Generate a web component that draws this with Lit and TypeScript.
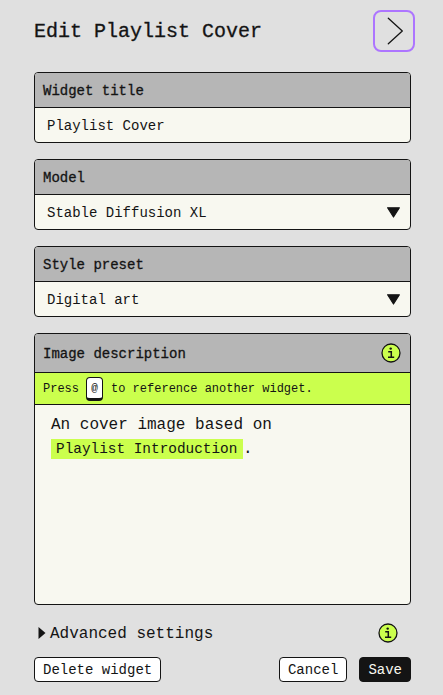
import { LitElement, html, css, svg } from "lit";
import { customElement, property } from "lit/decorators.js";

@customElement("info-badge")
class InfoBadge extends LitElement {
  static styles = css`
    :host { display: block; width: 20px; height: 20px; flex: none; }
    .icon { display: block; }
  `;
  render() {
    return html`<svg class="icon" width="20" height="20" viewBox="0 0 20 20">
      <circle cx="10" cy="10" r="9" fill="#cbff4d" stroke="#141414" stroke-width="1.3" />
      <circle cx="9.7" cy="5.6" r="1.2" fill="#141414" />
      <path d="M7.2 8.7H10.3V14M7 14.2H13.2" fill="none" stroke="#141414" stroke-width="1.5" />
    </svg>`;
  }
}

@customElement("field-box")
class FieldBox extends LitElement {
  @property() label = "";
  @property() value = "";
  @property({ type: Boolean }) select = false;

  static styles = css`
    :host { display: block; }
    .box {
      border: 1px solid #141414;
      border-radius: 4px;
      overflow: hidden;
      background: #f8f8f0;
    }
    .label, .value {
      display: flex;
      align-items: center;
      box-sizing: border-box;
      height: 34px;
      font-size: 14px;
      line-height: 20px;
    }
    .label {
      height: 35px;
      padding: 2px 8px 0;
      background: #b6b6b6;
      border-bottom: 1px solid #141414;
      -webkit-text-stroke: 0.3px #141414;
    }
    .value { justify-content: space-between; padding: 0 10px 0 12px; }
    .text { padding-top: 2px; }
    .arrow { display: block; }
  `;
  render() {
    return html`<div class="box">
      <div class="label">${this.label}</div>
      <div class="value">
        <span class="text">${this.value}</span>
        ${this.select
          ? html`<svg class="arrow" width="13" height="11" viewBox="0 0 13 11">
              ${svg`<path d="M.6 .8H12.4L6.5 10Z" fill="#141414" stroke="#141414" stroke-width="1.2" stroke-linejoin="round"/>`}
            </svg>`
          : ""}
      </div>
    </div>`;
  }
}

@customElement("app-root")
class AppRoot extends LitElement {
  static styles = css`
    :host {
      display: flex;
      flex-direction: column;
      box-sizing: border-box;
      width: 443px;
      height: 695px;
      padding: 10px 32px 0 34px;
      background: #e0e0e0;
      color: #141414;
      font-family: "Liberation Mono", monospace;
    }
    .header {
      display: flex;
      justify-content: space-between;
      align-items: center;
      height: 42px;
      margin-right: -4px;
      margin-bottom: 20px;
    }
    .title {
      margin: 0;
      padding-top: 2px;
      font-size: 20px;
      font-weight: 400;
      line-height: 28px;
      -webkit-text-stroke: 0.3px #141414;
    }
    .next {
      box-sizing: border-box;
      width: 42px;
      height: 42px;
      padding: 0;
      border: 2px solid #ad75ff;
      border-radius: 8px;
      background: none;
    }
    .chevron { display: block; }
    .fields { display: flex; flex-direction: column; gap: 16px; }
    .editor {
      display: flex;
      flex-direction: column;
      box-sizing: border-box;
      height: 272px;
      border: 1px solid #141414;
      border-radius: 4px;
      overflow: hidden;
      background: #f8f8f0;
    }
    .bar {
      display: flex;
      align-items: center;
      justify-content: space-between;
      box-sizing: border-box;
      height: 39px;
      padding: 0 9px 0 8px;
      background: #b6b6b6;
      border-bottom: 1px solid #141414;
      font-size: 14px;
    }
    .strong { padding-top: 2px; -webkit-text-stroke: 0.3px #141414; }
    .hint {
      display: flex;
      align-items: center;
      box-sizing: border-box;
      height: 32px;
      padding: 0 8px;
      background: #cbff4d;
      border-bottom: 1px solid #141414;
      font-size: 12px;
    }
    .key {
      box-sizing: border-box;
      width: 17px;
      height: 24px;
      margin: 0 8px 0 7px;
      border: 1px solid #141414;
      border-bottom-width: 3px;
      border-radius: 4px;
      background: #fff;
      font-size: 11px;
      line-height: 20px;
      text-align: center;
    }
    .text { padding: 8px 16px; font-size: 16px; line-height: 24px; }
    .mention {
      padding: 2px 5.6px 2px 5px;
      background: #cbff4d;
      font-size: 14.4px;
    }
    .advanced {
      display: flex;
      align-items: center;
      height: 20px;
      margin: 18px 13px 0 4px;
      font-size: 16px;
    }
    .caret { display: block; margin-right: 4px; }
    .grow { flex: 1; }
    .advanced .grow { padding-top: 1px; }
    .actions { display: flex; gap: 12px; margin-top: 14px; }
    .button {
      box-sizing: border-box;
      height: 25px;
      padding: 2px 8px 0;
      border: 1px solid #141414;
      border-radius: 4px;
      background: #fff;
      color: #141414;
      font: 14px/21px "Liberation Mono", monospace;
    }
    .primary { background: #141414; color: #f8f8f0; }
  `;
  render() {
    return html`
      <div class="header">
        <h1 class="title">Edit Playlist Cover</h1>
        <button class="next" aria-label="Next">
          <svg class="chevron" width="38" height="38" viewBox="0 0 38 38">
            <path d="M13.3 6.3L27.3 19L13.3 31.7" fill="none" stroke="#141414" stroke-width="1.3" stroke-linecap="round" stroke-linejoin="round" />
          </svg>
        </button>
      </div>
      <div class="fields">
        <field-box label="Widget title" value="Playlist Cover"></field-box>
        <field-box label="Model" value="Stable Diffusion XL" select></field-box>
        <field-box label="Style preset" value="Digital art" select></field-box>
        <div class="editor">
          <div class="bar">
            <span class="strong">Image description</span><info-badge></info-badge>
          </div>
          <div class="hint">
            <span>Press</span><span class="key">@</span><span>to reference another widget.</span>
          </div>
          <div class="text">
            An cover image based on<br /><span class="mention">Playlist Introduction</span>.
          </div>
        </div>
      </div>
      <div class="advanced">
        <svg class="caret" width="8" height="12" viewBox="0 0 8 12">
          <path d="M.5 0L7.5 6L.5 12Z" fill="#141414" />
        </svg>
        <span class="grow">Advanced settings</span><info-badge></info-badge>
      </div>
      <div class="actions">
        <button class="button">Delete widget</button>
        <span class="grow"></span>
        <button class="button cancel">Cancel</button>
        <button class="button primary">Save</button>
      </div>
    `;
  }
}
